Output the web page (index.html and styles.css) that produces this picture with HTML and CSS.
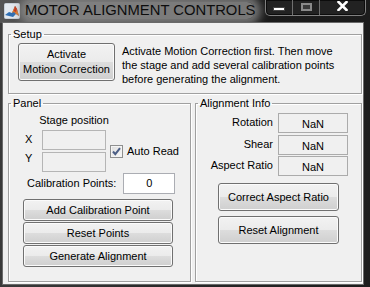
FILE: index.html
```html
<!DOCTYPE html>
<html>
<head>
<meta charset="utf-8">
<link rel="stylesheet" href="styles.css">
</head>
<body>
<div class="window">
  <div class="titlebar">
    <svg class="app-icon" width="16" height="16" viewBox="0 0 16 16">
      <rect x="0.5" y="0.5" width="15" height="15" rx="1" fill="#e4e9ef" stroke="#c8d0d8"/>
      <path d="M1 12 L5 9 L8 10 L11 3 L13 6 L15 13 L12 11 L9 14 L5 13 Z" fill="#2f6fb4"/>
      <path d="M8 10 L11 3 L13 6 L15 13 L12 11 L10 9 Z" fill="#e8741e"/>
      <path d="M11 3 L13 6 L12 9 L10 8 Z" fill="#c8321a"/>
    </svg>
    <span class="title">MOTOR ALIGNMENT CONTROLS</span>
    <div class="caps">
      <div class="cap cap-min"><span class="min-glyph"></span></div>
      <div class="cap cap-max"><span class="max-glyph"></span></div>
      <div class="cap cap-close">
        <svg width="11" height="10" viewBox="0 0 11 10"><path d="M1.5 1 L9.5 9 M9.5 1 L1.5 9" stroke="#ffffff" stroke-width="2.6" stroke-linecap="square"/></svg>
      </div>
    </div>
  </div>
  <div class="client">
    <fieldset class="group setup">
      <legend>Setup</legend>
      <div class="setup-body">
        <button class="btn btn-activate">Activate<br>Motion Correction</button>
        <p class="desc">Activate Motion Correction first. Then move<br>the stage and add several calibration points<br>before generating the alignment.</p>
      </div>
    </fieldset>
    <div class="row">
      <fieldset class="group panel">
        <legend>Panel</legend>
        <div class="stage">
          <span class="stage-title">Stage position</span>
          <span class="axis axis-x">X</span><span class="field field-x"></span>
          <span class="axis axis-y">Y</span><span class="field field-y"></span>
          <span class="check">
            <span class="check-box">
              <svg width="11" height="11" viewBox="0 0 11 11"><path d="M2 5.5 L4.3 8.2 L9 2.2" fill="none" stroke="#4c5f86" stroke-width="2"/></svg>
            </span>
            <span class="check-label">Auto Read</span>
          </span>
        </div>
        <div class="calib">
          <span class="calib-label">Calibration Points:</span>
          <span class="edit">0</span>
        </div>
        <div class="btn-stack">
          <button class="btn">Add Calibration Point</button>
          <button class="btn">Reset Points</button>
          <button class="btn">Generate Alignment</button>
        </div>
      </fieldset>
      <fieldset class="group info">
        <legend>Alignment Info</legend>
        <div class="metrics">
          <span class="mlabel">Rotation</span><span class="mval">NaN</span>
          <span class="mlabel">Shear</span><span class="mval">NaN</span>
          <span class="mlabel">Aspect Ratio</span><span class="mval">NaN</span>
        </div>
        <div class="info-btns">
          <button class="btn btn-big">Correct Aspect Ratio</button>
          <button class="btn btn-big">Reset Alignment</button>
        </div>
      </fieldset>
    </div>
  </div>
</div>
</body>
</html>
```

FILE: styles.css
```css
* { box-sizing: border-box; }
html, body { margin: 0; padding: 0; }
body {
  width: 370px;
  height: 287px;
  overflow: hidden;
  background: #1e1e1e;
  font-family: "Liberation Sans", Arial, sans-serif;
  font-size: 11px;
  color: #000;
}
.window {
  width: 370px;
  height: 287px;
  display: flex;
  flex-direction: column;
  background: linear-gradient(to right, #3a3a3a 0%, #2a2a2a 40%, #1c1c1c 100%);
}
.titlebar {
  height: 23px;
  flex: none;
  display: flex;
  align-items: flex-start;
  background: linear-gradient(to right, #555 0%, #3a3a3a 30%, #1a1a1a 70%, #1c1c1c 100%);
}
.app-icon {
  margin: 3px 0 0 4px;
  flex: none;
}
.title {
  margin: 2px 0 0 5px;
  font-size: 14.8px;
  line-height: 17px;
  color: #0d0d0d;
  background: rgba(150, 150, 150, 0.75);
  box-shadow: 0 0 9px 6px rgba(150, 150, 150, 0.72);
  border-radius: 8px;
  white-space: nowrap;
}
.caps {
  margin-left: auto;
  margin-right: 4px;
  display: flex;
  height: 16px;
  border: 1px solid #808080;
  border-top: none;
  border-radius: 0 0 5px 5px;
  background: #222;
  box-shadow: inset 0 0 0 1px #0c0c0c;
  overflow: hidden;
}
.cap {
  display: flex;
  align-items: center;
  justify-content: center;
  height: 100%;
}
.cap-min { width: 27px; border-right: 1px solid #707070; }
.cap-max { width: 27px; border-right: 1px solid #707070; }
.cap-close { width: 45px; }
.min-glyph {
  width: 12px;
  height: 4px;
  background: #fff;
  border: 1px solid #444;
  margin-top: 2px;
}
.max-glyph {
  width: 11px;
  height: 8px;
  border: 2px solid #8a8a8a;
  background: #3a3a3a;
  margin-top: -2px;
}
.cap-close svg { margin-top: -3px; }

.client {
  flex: 1;
  margin: 0 7px 3px 3px;
  background: #f0f0f0;
  padding: 5px 1px 2px 5px;
  display: flex;
  flex-direction: column;
  box-shadow: 0 0 0 1px #6a6a6a;
}
.group {
  margin: 0;
  padding: 0;
  min-width: 0;
  border: 1px solid #a0a0a0;
  box-shadow: inset 1px 1px 0 #fff, 1px 1px 0 #fff;
}
.group legend {
  margin-left: 2px;
  padding: 0 2px;
  font-size: 11px;
  line-height: 13px;
}
.setup-body {
  display: flex;
  align-items: flex-start;
  gap: 7px;
  height: 52px;
  padding: 2px 4px 0 9px;
}
.btn {
  font-family: "Liberation Sans", Arial, sans-serif;
  font-size: 11px;
  color: #000;
  border: 1px solid #707070;
  border-radius: 3px;
  background: linear-gradient(#f2f2f2 0%, #ebebeb 50%, #dddddd 50%, #cfcfcf 100%);
  box-shadow: inset 0 0 0 1px #fbfbfb;
  padding: 0;
  margin: 0;
  text-align: center;
}
.btn-activate {
  width: 97px;
  height: 38px;
  line-height: 15px;
  flex: none;
}
.desc {
  margin: 1px 0 0;
  line-height: 14px;
  white-space: nowrap;
}
.row {
  flex: 1;
  display: flex;
  gap: 4px;
  margin-top: 3px;
}
.panel { width: 183px; flex: none; display: flex; flex-direction: column; }
.info { width: 167px; flex: none; display: flex; flex-direction: column; }

.panel > .stage,
.panel > .calib,
.panel > .btn-stack { margin-left: 16px; }
.stage {
  display: grid;
  grid-template-columns: 17px 64px auto;
  grid-template-rows: 14.5px 20px 20px;
  row-gap: 2px;
  padding-top: 3.5px;
}
.stage-title {
  grid-column: 2;
  grid-row: 1;
  justify-self: center;
  white-space: nowrap;
  line-height: 13px;
}
.axis { line-height: 13px; align-self: start; }
.axis-x { grid-column: 1; grid-row: 2; margin-top: 3px; }
.axis-y { grid-column: 1; grid-row: 3; margin-top: 0; }
.field {
  grid-column: 2;
  border: 1px solid #b5b5b5;
  background: #f0f0f0;
}
.field-x { grid-row: 2; }
.field-y { grid-row: 3; }
.check {
  grid-column: 3;
  grid-row: 2 / 4;
  align-self: center;
  display: flex;
  align-items: center;
  margin-left: 4px;
  margin-top: 1px;
}
.check-box {
  width: 13px;
  height: 13px;
  border: 1px solid #8e8f8f;
  background: linear-gradient(135deg, #dcdcdc, #fafafa);
  box-shadow: inset 0 0 0 1px #f4f4f4;
  display: flex;
  align-items: center;
  justify-content: center;
}
.check-label { margin-left: 4px; line-height: 13px; white-space: nowrap; }
.calib {
  display: flex;
  align-items: center;
  gap: 7px;
  margin-top: 1px;
  padding-left: 2px;
}
.calib-label { line-height: 13px; white-space: nowrap; }
.edit {
  width: 52px;
  height: 21px;
  background: #fff;
  border: 1px solid #abadb3;
  text-align: center;
  line-height: 19px;
}
.btn-stack {
  display: flex;
  flex-direction: column;
  gap: 1px;
  margin-top: 5px;
  width: 150px;
  position: relative;
  left: -2px;
}
.btn-stack .btn { height: 22px; }

.metrics {
  display: grid;
  grid-template-columns: 77px 70px;
  grid-auto-rows: 20px;
  column-gap: 5px;
  row-gap: 1.5px;
  padding-top: 3px;
}
.mlabel {
  justify-self: end;
  align-self: center;
  line-height: 13px;
  margin-top: -1px;
}
.mval {
  border: 1px solid #ababab;
  background: #f0f0f0;
  text-align: center;
  line-height: 19px;
  padding-top: 1px;
}
.info-btns {
  display: flex;
  flex-direction: column;
  gap: 5px;
  margin: 7px 0 0 22px;
  width: 121px;
}
.btn-big { height: 28px; }
```
